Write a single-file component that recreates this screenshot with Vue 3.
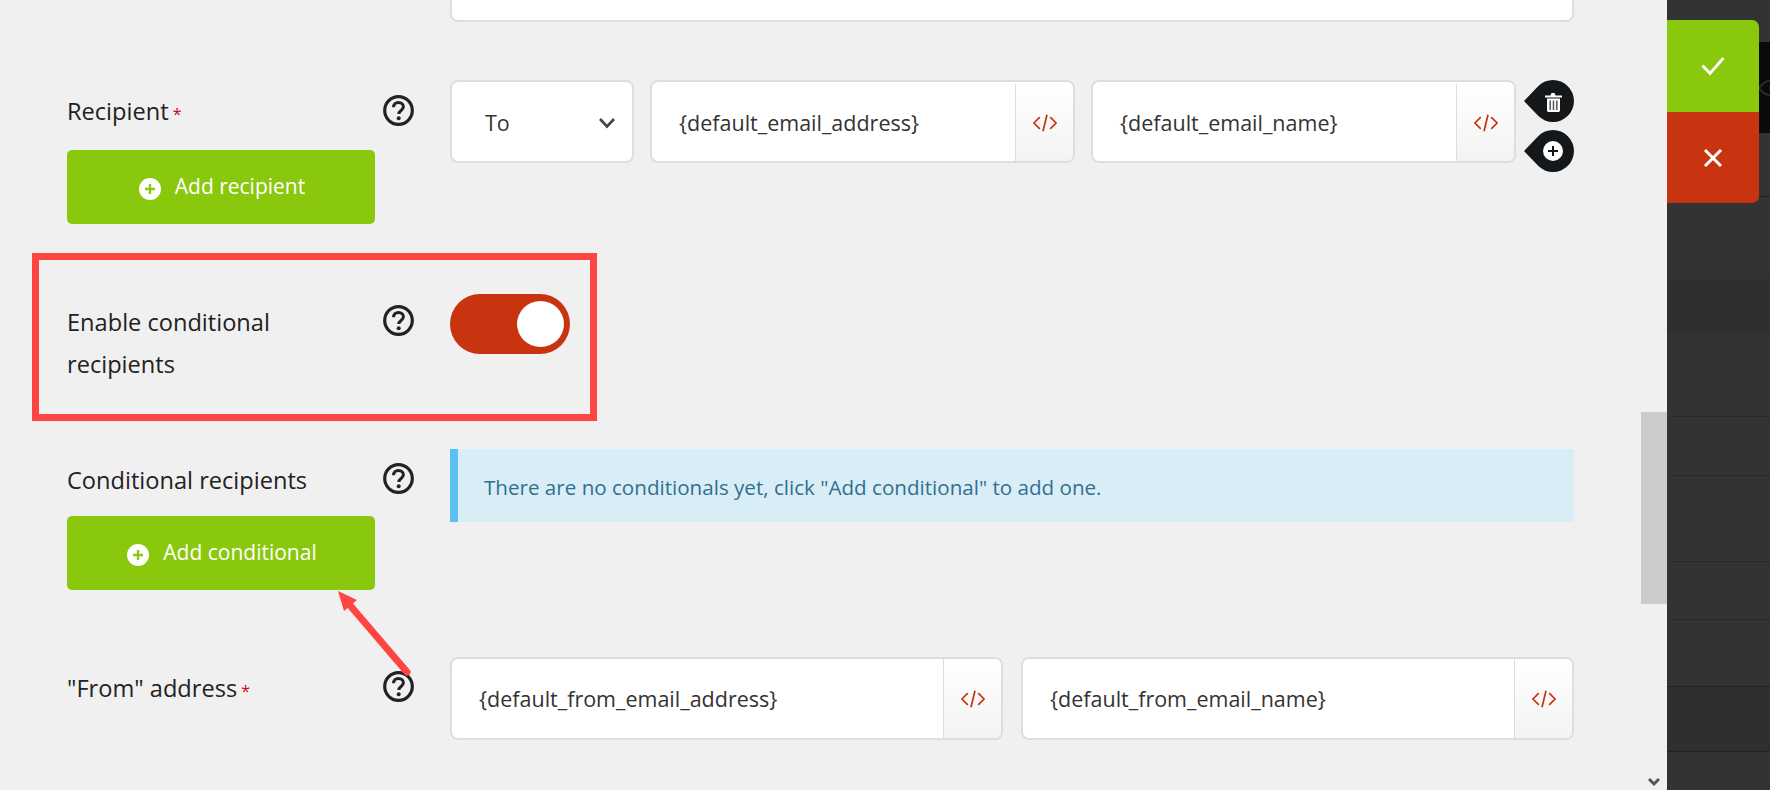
<template>
  <div class="page">
    <svg class="sprite" aria-hidden="true">
      <symbol id="help" viewBox="0 0 31 31">
        <circle cx="15.5" cy="15.5" r="13.8" fill="none" stroke="#222" stroke-width="3.2" />
        <path d="M10.6 12.2c0-3 2.2-4.7 4.9-4.7s4.9 1.7 4.9 4.3c0 3.6-4.6 3.7-4.6 7.2" fill="none" stroke="#222" stroke-width="3" />
        <circle cx="15.7" cy="23.2" r="2" fill="#222" />
      </symbol>
      <symbol id="add" viewBox="0 0 22 22">
        <circle cx="11" cy="11" r="11" fill="#fff" />
        <path d="M11 6v10M6 11h10" stroke="#8ac80e" stroke-width="2.4" />
      </symbol>
      <symbol id="code" viewBox="0 0 24 18">
        <path d="M6.8 3.2.9 9l5.9 5.8M17.2 3.2 23.1 9l-5.9 5.8M14 .8 10 17.2" fill="none" stroke="#c8340f" stroke-width="1.7" />
      </symbol>
    </svg>

    <main class="form">
      <div class="cut-input"></div>

      <section class="row row-recipient">
        <div class="side">
          <div class="label-line">
            <span>Recipient <i class="req">*</i></span>
            <svg class="help"><use href="#help" /></svg>
          </div>
          <button class="add-btn">
            <svg class="add-icon"><use href="#add" /></svg>
            Add recipient
          </button>
        </div>
        <div class="fields">
          <div class="box select">
            <span>To</span>
            <svg class="chevron" viewBox="0 0 18 12">
              <path d="M2 2l7 7.5L16 2" fill="none" stroke="#444" stroke-width="2.6" />
            </svg>
          </div>
          <div class="box input email">
            <span class="value">{default_email_address}</span>
            <span class="addon"><svg class="code"><use href="#code" /></svg></span>
          </div>
          <div class="box input email">
            <span class="value">{default_email_name}</span>
            <span class="addon"><svg class="code"><use href="#code" /></svg></span>
          </div>
          <div class="pins">
            <svg class="pin" viewBox="0 0 50 42">
              <path d="M0 21 14.15 6.15A21 21 0 1 1 14.15 35.85Z" fill="#14181b" />
              <path d="M21 15.5h5.5l1-2.5h3l1 2.5H38v2H21z" fill="#fff" />
              <path d="M23 18.5h13V31l-1.2 1H24.2L23 31z" fill="#fff" />
              <path d="M26.2 20.5v9.5M29.5 20.5v9.5M32.8 20.5v9.5" stroke="#555" stroke-width="1.5" />
            </svg>
            <svg class="pin" viewBox="0 0 50 42">
              <path d="M0 21 14.15 6.15A21 21 0 1 1 14.15 35.85Z" fill="#14181b" />
              <circle cx="29" cy="21" r="10" fill="#fff" />
              <path d="M29 16v10M24 21h10" stroke="#14181b" stroke-width="2" />
            </svg>
          </div>
        </div>
      </section>

      <section class="row row-toggle">
        <div class="side">
          <div class="label-line">
            <span class="wrap">Enable conditional recipients</span>
            <svg class="help"><use href="#help" /></svg>
          </div>
        </div>
        <div class="fields">
          <div class="toggle"><span class="knob"></span></div>
        </div>
      </section>

      <section class="row row-conditional">
        <div class="side">
          <div class="label-line">
            <span>Conditional recipients</span>
            <svg class="help"><use href="#help" /></svg>
          </div>
          <button class="add-btn">
            <svg class="add-icon"><use href="#add" /></svg>
            Add conditional
          </button>
        </div>
        <div class="fields">
          <div class="alert">There are no conditionals yet, click "Add conditional" to add one.</div>
        </div>
      </section>

      <section class="row row-from">
        <div class="side">
          <div class="label-line">
            <span>"From" address <i class="req">*</i></span>
            <svg class="help"><use href="#help" /></svg>
          </div>
        </div>
        <div class="fields from-fields">
          <div class="box input">
            <span class="value">{default_from_email_address}</span>
            <span class="addon"><svg class="code"><use href="#code" /></svg></span>
          </div>
          <div class="box input">
            <span class="value">{default_from_email_name}</span>
            <span class="addon"><svg class="code"><use href="#code" /></svg></span>
          </div>
        </div>
      </section>

      <!-- screenshot annotations -->
      <div class="mark-box"></div>
      <svg class="mark-arrow" viewBox="0 0 85 92">
        <path d="M77 87 18 18" stroke="#ff4444" stroke-width="7" stroke-linecap="round" />
        <path d="M8 6 27 15 14 26Z" fill="#ff4444" />
      </svg>

      <div class="scrollbar">
        <div class="thumb"></div>
        <svg class="scroll-down" viewBox="0 0 12 10">
          <path d="M1 2l5 5 5-5" fill="none" stroke="#555" stroke-width="3" />
        </svg>
      </div>
    </main>

    <aside class="sidebar">
      <div class="act-row">
        <svg class="eye" viewBox="0 0 30 18">
          <path d="M1 9s5-8 14-8 14 8 14 8-5 8-14 8S1 9 1 9z" fill="none" stroke="#2c2c2c" stroke-width="2" />
          <circle cx="15" cy="9" r="4" fill="#2c2c2c" />
        </svg>
      </div>
      <div v-for="band in bands" :key="band.h" class="band" :class="band.cls" :style="{ height: band.h + 'px' }"></div>

      <div class="actions">
        <div class="action ok">
          <svg width="24" height="20" viewBox="0 0 24 20">
            <path d="M1.5 9.5 9 17.5 22.5 2" fill="none" stroke="#fff" stroke-width="2.8" />
          </svg>
        </div>
        <div class="action cancel">
          <svg width="20" height="20" viewBox="0 0 20 20">
            <path d="M2 2l16 16M18 2 2 18" fill="none" stroke="#fff" stroke-width="3" />
          </svg>
        </div>
      </div>
    </aside>
  </div>
</template>

<script setup>
// heights of the rows under the black strip, top to bottom
const bands = [
  { h: 64, cls: 'line' },
  { h: 82, cls: '' },
  { h: 54, cls: 'dark' },
  { h: 84, cls: 'thin' },
  { h: 59, cls: 'thin' },
  { h: 86, cls: 'thin' },
  { h: 58, cls: 'thin' },
  { h: 67, cls: 'line' },
  { h: 64.5, cls: 'dark line' },
  { h: 39, cls: '' },
]
</script>

<style scoped>
.page {
  display: flex;
  width: 1770px;
  height: 790px;
  overflow: hidden;
  font-family: "Open Sans", "Noto Sans", sans-serif;
}
.sprite {
  position: absolute;
  width: 0;
  height: 0;
}
.form {
  position: relative;
  width: 1667px;
  height: 790px;
  flex: none;
  background: #f0f0f0;
}
.cut-input {
  width: 1124px;
  height: 22px;
  margin-left: 450px;
  box-sizing: border-box;
  background: #fff;
  border: 2px solid #dedede;
  border-top: 0;
  border-radius: 0 0 8px 8px;
}
.row {
  display: flex;
  padding-left: 67px;
}
.row-recipient { margin-top: 58px; }
.row-toggle { margin-top: 70px; }
.row-conditional { margin-top: 64px; }
.row-from { margin-top: 67px; }
.side {
  width: 347px;
  flex: none;
  padding-top: 10px;
}
.row-toggle .side { padding-top: 7px; }
.row-recipient .label-line { margin-top: -1px; }
.row-recipient .help { margin-top: 5px; }
.row-recipient .add-btn { margin-top: 18px; }
.row-recipient .side { padding-top: 11px; }
.row-recipient .box { padding-top: 2px; }
.label-line {
  display: flex;
  justify-content: space-between;
  align-items: flex-start;
  font-size: 23.6px;
  line-height: 42px;
  color: #222;
}
.wrap { width: 290px; }
.req {
  margin-left: -2px;
  color: #d0021b;
  font-size: 16px;
  font-style: normal;
  line-height: 0;
}
.help {
  width: 31px;
  height: 31px;
  flex: none;
  margin-top: 4px;
}
.add-btn {
  display: flex;
  align-items: center;
  justify-content: center;
  gap: 14px;
  box-sizing: border-box;
  width: 308px;
  height: 74px;
  margin-top: 17px;
  padding: 0 0 2px 2px;
  border: 0;
  border-radius: 5px;
  background: #8ac80e;
  color: #fff;
  font: inherit;
  font-size: 21px;
}
.row-conditional .add-btn { margin-top: 15px; }
.add-icon {
  width: 22px;
  height: 22px;
  margin-top: 5px;
}
.fields {
  display: flex;
  width: 1124px;
  margin-left: 36px;
  flex: none;
  gap: 16px;
}
.from-fields { gap: 18px; }
.box {
  box-sizing: border-box;
  height: 83px;
  background: #fff;
  border: 2px solid #dedede;
  border-radius: 8px;
  color: #333;
  font-size: 21.5px;
  display: flex;
  align-items: center;
}
.select {
  width: 184px;
  flex: none;
  justify-content: space-between;
  padding: 0 16px 0 33px;
}
.chevron { width: 18px; height: 12px; }
.input {
  flex: 1;
  overflow: hidden;
}
.email {
  flex: none;
  width: 425px;
}
.value {
  flex: 1;
  padding-left: 27px;
  white-space: nowrap;
}
.addon {
  display: flex;
  align-items: center;
  justify-content: center;
  width: 58px;
  height: 100%;
  flex: none;
  box-sizing: border-box;
  border-left: 1px solid #ddd;
  background: linear-gradient(#fff, #f3f3f3);
}
.code { width: 24px; height: 18px; }
.pins {
  display: flex;
  flex-direction: column;
  gap: 8px;
  margin: 0 0 0 -8px;
}
.pin {
  display: block;
  width: 50px;
  height: 42px;
}
.toggle {
  display: flex;
  align-items: center;
  justify-content: flex-end;
  box-sizing: border-box;
  width: 120px;
  height: 60px;
  padding-right: 6px;
  border-radius: 30px;
  background: #c8340f;
}
.knob {
  width: 47px;
  height: 46px;
  border-radius: 50%;
  background: #fff;
}
.alert {
  box-sizing: border-box;
  width: 100%;
  height: 73px;
  padding-left: 26px;
  border-left: 8px solid #5bc0f2;
  background: #d9edf7;
  color: #31708f;
  font-size: 20.6px;
  line-height: 76px;
}
.mark-box {
  position: absolute;
  left: 32px;
  top: 253px;
  width: 565px;
  height: 168px;
  box-sizing: border-box;
  border: 7px solid #ff4444;
}
.mark-arrow {
  position: absolute;
  left: 330px;
  top: 585px;
  width: 85px;
  height: 92px;
}
.scrollbar {
  position: absolute;
  right: 0;
  top: 0;
  width: 26px;
  height: 790px;
}
.thumb {
  position: absolute;
  top: 412px;
  width: 26px;
  height: 192px;
  background: #ccc;
}
.scroll-down {
  position: absolute;
  left: 7px;
  top: 777px;
  width: 12px;
  height: 10px;
}
.sidebar {
  position: relative;
  width: 103px;
  height: 790px;
  flex: none;
  padding-top: 42px;
  box-sizing: border-box;
  background: #333;
  overflow: hidden;
}
.act-row {
  display: flex;
  align-items: center;
  justify-content: flex-end;
  height: 91px;
  background: #0a0a0a;
}
.eye {
  width: 30px;
  height: 18px;
  flex: none;
  margin-right: -18px;
}
.band {
  box-sizing: border-box;
  background: #333;
}
.band.dark { background: #2f2f2f; }
.band.line { border-bottom: 1px solid #222; }
.band.thin { border-bottom: 1px solid #2a2a2a; margin-left: 5px; }
.actions {
  position: absolute;
  left: 0;
  top: 20px;
  width: 92px;
  border-radius: 0 7px 7px 0;
  overflow: hidden;
}
.action {
  display: flex;
  align-items: center;
  justify-content: center;
  height: 92px;
}
.action.ok { background: #8ac80e; }
.action.cancel { height: 91px; background: #c8340f; }
</style>

<style>
html, body {
  background: #f0f0f0;
  overflow: hidden;
}
</style>
